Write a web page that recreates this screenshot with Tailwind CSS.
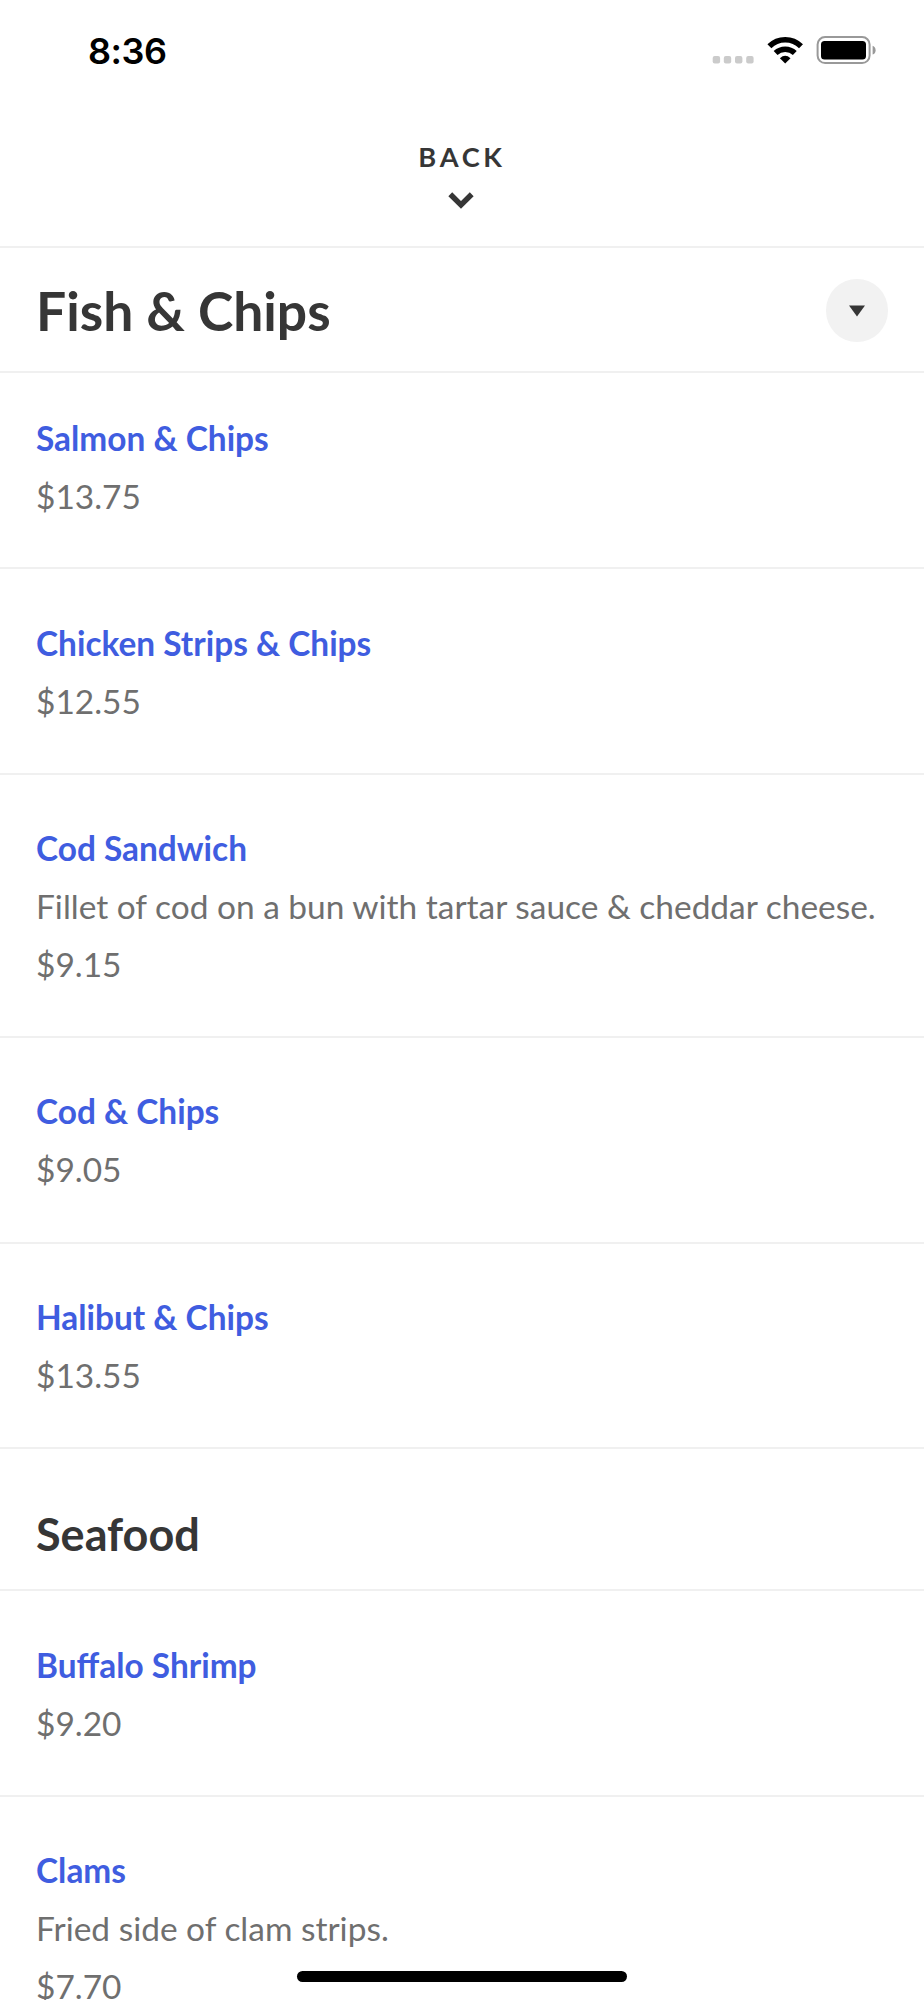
<!DOCTYPE html>
<html lang="en">
<head>
<meta charset="utf-8">
<title>Menu</title>
<script src="https://cdn.jsdelivr.net/npm/@tailwindcss/browser@4"></script>
</head>
<body class="bg-white">
<div class="relative flex h-[2000px] w-[924px] flex-col overflow-hidden bg-white font-['Lato',sans-serif] text-[33.46px] leading-[58px] text-[#6f6f6f]">
  <div class="flex h-[100px] shrink-0 items-start justify-between pl-[88px] pr-[48px]">
    <div class="pt-[29px] font-['Inter',sans-serif] text-[36px] font-semibold leading-[44px] tracking-[-0.5px] text-black">8:36</div>
    <svg class="mt-[30px] h-[40px] w-[166px]" viewBox="710 30 166 40">
      <g fill="#cbcbcb"><rect x="712.7" y="56" width="7.4" height="7.4" rx="2"/><rect x="723.8" y="56" width="7.4" height="7.4" rx="2"/><rect x="735" y="56" width="7.4" height="7.4" rx="2"/><rect x="746.2" y="56" width="7.4" height="7.4" rx="2"/></g>
      <g fill="none" stroke="#000" stroke-width="5.6"><path d="M769.4 46.2A22.4 22.4 0 0 1 801 46.2"/><path d="M775.6 53A14 14 0 0 1 794.8 53"/></g>
      <path d="M785.2 63.6L779.9 58.2Q785.2 53.4 790.5 58.2Z"/>
      <rect x="817.6" y="37.1" width="52" height="26" rx="7.5" fill="none" stroke="#999" stroke-width="2"/>
      <rect x="821" y="41" width="45" height="18.6" rx="3.6"/>
      <path d="M872.6 45.8Q875.6 47 875.6 50.2T872.6 54.6Z" fill="#999"/>
    </svg>
  </div>
  <div class="flex h-[148px] shrink-0 flex-col items-center border-b-2 border-[#f0f0f0] text-[#363636]">
    <div class="mt-[41px] text-[27.2px] font-bold leading-[32px] tracking-[3.7px]">BACK</div>
    <svg class="mr-[3px] mt-[19px] h-[18px] w-[26px]" viewBox="0 0 26 18"><path d="M2.28 2.3L13 13.02L23.72 2.3" fill="none" stroke="#363636" stroke-width="5.45"/></svg>
  </div>
  <div class="flex h-[125px] shrink-0 items-center justify-between border-b-2 border-[#f0f0f0] pl-9 pr-9 pt-[2px]">
    <h1 class="pb-[2px] text-[53.4px] font-bold leading-[64px] text-[#363636]">Fish &amp; Chips</h1>
    <div class="flex size-[62.5px] items-center justify-center rounded-full bg-[#f2f2f2] pl-[1px]">
      <svg class="h-[12px] w-[16px]" viewBox="0 0 16 12"><path d="M0 .5H16L8 11.5Z" fill="#363636"/></svg>
    </div>
  </div>
  <div class="h-[196px] shrink-0 border-b-2 border-[#f0f0f0] px-9 pt-[36px]">
    <div class="text-[33.4px] font-bold text-[#3f5de0]">Salmon &amp; Chips</div><div>$13.75</div>
  </div>
  <div class="h-[205.5px] shrink-0 border-b-2 border-[#f0f0f0] px-9 pt-[45px]">
    <div class="text-[33.4px] font-bold text-[#3f5de0]">Chicken Strips &amp; Chips</div><div>$12.55</div>
  </div>
  <div class="h-[263.5px] shrink-0 border-b-2 border-[#f0f0f0] px-9 pt-[44px]">
    <div class="text-[33.4px] font-bold text-[#3f5de0]">Cod Sandwich</div><div class="whitespace-nowrap">Fillet of cod on a bun with tartar sauce &amp; cheddar cheese.</div><div>$9.15</div>
  </div>
  <div class="h-[205.5px] shrink-0 border-b-2 border-[#f0f0f0] px-9 pt-[44px]">
    <div class="text-[33.4px] font-bold text-[#3f5de0]">Cod &amp; Chips</div><div>$9.05</div>
  </div>
  <div class="h-[205px] shrink-0 border-b-2 border-[#f0f0f0] px-9 pt-[44px]">
    <div class="text-[33.4px] font-bold text-[#3f5de0]">Halibut &amp; Chips</div><div>$13.55</div>
  </div>
  <div class="h-[142.5px] shrink-0 border-b-2 border-[#f0f0f0] px-9 pt-[57px]">
    <h2 class="text-[45px] font-bold leading-[56px] text-[#363636]">Seafood</h2>
  </div>
  <div class="h-[205.5px] shrink-0 border-b-2 border-[#f0f0f0] px-9 pt-[45px]">
    <div class="text-[33.4px] font-bold text-[#3f5de0]">Buffalo Shrimp</div><div>$9.20</div>
  </div>
  <div class="h-[263.5px] shrink-0 px-9 pt-[44px]">
    <div class="text-[33.4px] font-bold text-[#3f5de0]">Clams</div><div>Fried side of clam strips.</div><div>$7.70</div>
  </div>
  <div class="absolute left-[297px] top-[1971px] h-[11px] w-[330px] rounded-full bg-black"></div>
</div>
</body>
</html>
